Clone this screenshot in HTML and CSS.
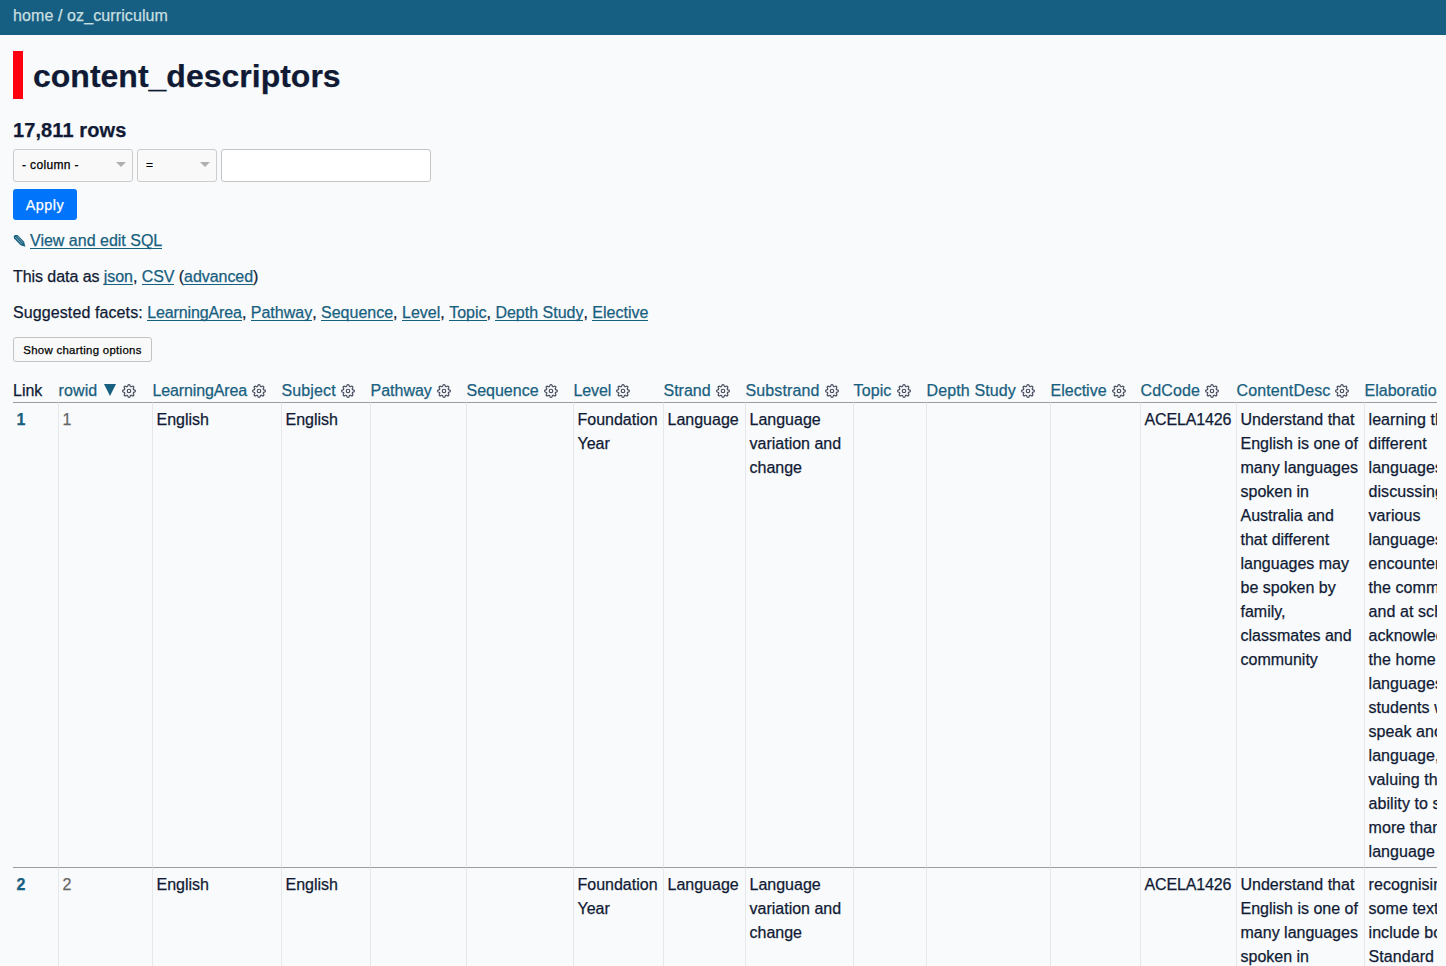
FILE: index.html
```html
<!DOCTYPE html>
<html lang="en">
<head>
<meta charset="utf-8">
<title>oz_curriculum: content_descriptors</title>
<link rel="stylesheet" href="styles.css">
</head>
<body>
<svg class="defs" width="0" height="0">
  <symbol id="cog" viewBox="0 0 24 24">
    <circle cx="12" cy="12" r="3"></circle>
    <path d="M19.4 15a1.65 1.65 0 0 0 .33 1.82l.06.06a2 2 0 0 1 0 2.83 2 2 0 0 1-2.83 0l-.06-.06a1.65 1.65 0 0 0-1.82-.33 1.65 1.65 0 0 0-1 1.51V21a2 2 0 0 1-2 2 2 2 0 0 1-2-2v-.09A1.65 1.65 0 0 0 9 19.4a1.65 1.65 0 0 0-1.82.33l-.06.06a2 2 0 0 1-2.83 0 2 2 0 0 1 0-2.83l.06-.06a1.65 1.65 0 0 0 .33-1.82 1.65 1.65 0 0 0-1.51-1H3a2 2 0 0 1-2-2 2 2 0 0 1 2-2h.09A1.65 1.65 0 0 0 4.6 9a1.65 1.65 0 0 0-.33-1.82l-.06-.06a2 2 0 0 1 0-2.83 2 2 0 0 1 2.83 0l.06.06a1.65 1.65 0 0 0 1.82.33H9a1.65 1.65 0 0 0 1-1.51V3a2 2 0 0 1 2-2 2 2 0 0 1 2 2v.09a1.65 1.65 0 0 0 1 1.51 1.65 1.65 0 0 0 1.82-.33l.06-.06a2 2 0 0 1 2.83 0 2 2 0 0 1 0 2.83l-.06.06a1.65 1.65 0 0 0-.33 1.82V9a1.65 1.65 0 0 0 1.51 1H21a2 2 0 0 1 2 2 2 2 0 0 1-2 2h-.09a1.65 1.65 0 0 0-1.51 1z"></path>
  </symbol>
</svg>
<header class="topbar"><a href="#">home</a> / <a href="#">oz_curriculum</a></header>
<main class="content">
  <h1 class="title">content_descriptors</h1>
  <h3 class="count">17,811 rows</h3>
  <form class="filters">
    <div class="filter-row">
      <div class="select column">- column -</div>
      <div class="select op">=</div>
      <input class="value" type="text" aria-label="Filter value">
    </div>
    <button class="apply" type="button">Apply</button>
  </form>
  <p class="line sql"><svg class="pencil" viewBox="0 0 13 14"><path class="body" d="M.6 2 2.2.9 4.6 1 11 7.6 12.4 12.8 7.6 11.2 1.1 4.6z"/><path class="grain" d="M2.2 3 8.8 10M3.9 2.2 10.2 8.8"/></svg><a href="#">View and edit SQL</a></p>
  <p class="line export">This data as <a href="#">json</a>, <a href="#">CSV</a> (<a href="#">advanced</a>)</p>
  <p class="line facets"><span class="label">Suggested facets:</span> <a class="tight" href="#">LearningArea</a>, <a href="#">Pathway</a>, <a href="#">Sequence</a>, <a href="#">Level</a>, <a href="#">Topic</a>, <a href="#">Depth Study</a>, <a href="#">Elective</a></p>
  <button class="chart" type="button">Show charting options</button>
  <div class="table-wrap">
    <table class="rows">
      <colgroup><col class="w45"><col class="w94"><col class="w129"><col class="w89"><col class="w96"><col class="w107"><col class="w90"><col class="w82"><col class="w108"><col class="w73"><col class="w124"><col class="w90"><col class="w96"><col class="w128"><col class="w128"></colgroup>
      <thead><tr>
        <th class="plain">Link</th>
        <th><a class="loose" href="#">rowid<svg class="sort" viewBox="0 0 12 12"><path d="M0 0h12L6 12z"/></svg></a><svg class="cog"><use href="#cog"/></svg></th>
        <th><a class="tight" href="#">LearningArea</a><svg class="cog"><use href="#cog"/></svg></th>
        <th><a class="loose" href="#">Subject</a><svg class="cog"><use href="#cog"/></svg></th>
        <th><a href="#">Pathway</a><svg class="cog"><use href="#cog"/></svg></th>
        <th><a href="#">Sequence</a><svg class="cog"><use href="#cog"/></svg></th>
        <th><a class="tight" href="#">Level</a><svg class="cog"><use href="#cog"/></svg></th>
        <th><a href="#">Strand</a><svg class="cog"><use href="#cog"/></svg></th>
        <th><a class="loose" href="#">Substrand</a><svg class="cog"><use href="#cog"/></svg></th>
        <th><a class="loose" href="#">Topic</a><svg class="cog"><use href="#cog"/></svg></th>
        <th><a class="loose" href="#">Depth Study</a><svg class="cog"><use href="#cog"/></svg></th>
        <th><a href="#">Elective</a><svg class="cog"><use href="#cog"/></svg></th>
        <th><a class="loose" href="#">CdCode</a><svg class="cog"><use href="#cog"/></svg></th>
        <th><a class="loose" href="#">ContentDesc</a><svg class="cog"><use href="#cog"/></svg></th>
        <th><a href="#">Elaboration</a><svg class="cog"><use href="#cog"/></svg></th>
      </tr></thead>
      <tbody>
      <tr>
        <td><a class="pk" href="#">1</a></td><td class="num">1</td><td>English</td><td>English</td><td></td><td></td>
        <td>Foundation<br>Year</td><td>Language</td><td>Language<br>variation and<br>change</td><td></td><td></td><td></td>
        <td class="code">ACELA1426</td>
        <td>Understand that<br>English is one of<br>many languages<br>spoken in<br>Australia and<br>that different<br>languages may<br>be spoken by<br>family,<br>classmates and<br>community</td>
        <td class="wide">learning that<br>different<br>languages exist,<br>discussing the<br>various<br>languages<br>encountered in<br>the community<br>and at school,<br>acknowledging<br>the home<br>languages of<br>students who<br>speak another<br>language, and<br>valuing the<br>ability to speak<br>more than one<br>language</td>
      </tr>
      <tr>
        <td><a class="pk" href="#">2</a></td><td class="num">2</td><td>English</td><td>English</td><td></td><td></td>
        <td>Foundation<br>Year</td><td>Language</td><td>Language<br>variation and<br>change</td><td></td><td></td><td></td>
        <td class="code">ACELA1426</td>
        <td>Understand that<br>English is one of<br>many languages<br>spoken in</td>
        <td class="wide">recognising that<br>some texts can<br>include both<br>Standard</td>
      </tr>
      </tbody>
    </table>
  </div>
</main>
</body>
</html>
```
FILE: styles.css
```css
* { box-sizing: border-box; }
html, body { height: 966px; overflow: hidden; }
body {
  margin: 0;
  background: #f8fafb;
  color: #111a35;
  font: 16px/24px "Helvetica Neue", "Liberation Sans", Arial, sans-serif;
  -webkit-text-stroke: 0.25px;
}
.defs { display: block; height: 0; }
a { color: #18607f; text-decoration: none; }
.topbar { height: 35px; padding: 4px 13px 0; background: #175f82; color: #d5e5e6; letter-spacing: 0.1px; }
.topbar a { color: #c8dfe0; }
.content { padding: 16px 9px 0 13px; }
.title {
  margin: 0; height: 48px; padding-left: 10px;
  border-left: 10px solid #ff0010;
  font-size: 32px; line-height: 50px;
}
.count { margin: 19px 0 0; height: 31px; font-size: 20px; line-height: 25px; letter-spacing: 0.1px; }
.filter-row { display: flex; gap: 4px; height: 33px; }
.select {
  position: relative; height: 33px; padding-left: 8px;
  border: 1px solid #ccc; border-radius: 3px; background: #f9f9f9; color: #000;
  font-size: 12px; line-height: 30px; letter-spacing: 0.35px;
}
.select::after {
  content: ""; position: absolute; right: 6px; top: 12px;
  border: 5px solid transparent; border-top-color: #b0b0b0; border-bottom: 0;
}
.column { width: 120px; }
.op { width: 80px; }
.value { width: 210px; height: 33px; border: 1px solid #c4c4c4; border-radius: 3px; background: #fff; }
.apply {
  display: block; margin-top: 7px; width: 64px; height: 31px; padding: 1px 0 0;
  border: 0; border-radius: 3px; background: #0074fb; color: #fff;
  font: 14.4px/30px "Liberation Sans", sans-serif; letter-spacing: 0.5px;
}
.line { margin: 0 0 12px; height: 24px; white-space: nowrap; }
.line a { box-shadow: 0 1px 0 #18607f; line-height: 17px; display: inline-block; height: 16px; }
.sql { margin-top: 9px; }
.export { letter-spacing: -0.06px; }
.label { letter-spacing: 0.1px; }
a.tight { letter-spacing: -0.12px; }
a.loose { letter-spacing: 0.13px; }
.pencil { width: 13px; height: 14px; margin-right: 4px; vertical-align: -2px; }
.pencil .body { fill: #18607f; }
.pencil .grain { fill: none; stroke: #c5dbe2; stroke-width: 0.6; }
.chart {
  display: block; width: 139px; height: 25px; padding: 1px 0 0;
  border: 1px solid #c4c4c4; border-radius: 3px; background: #f9f9f9; color: #000;
  font: 11.4px/22px "Liberation Sans", sans-serif; letter-spacing: 0.3px;
}
.table-wrap { width: 1424px; margin-top: 16px; overflow: hidden; }
.rows { width: 1479px; table-layout: fixed; border-collapse: separate; border-spacing: 0; }
.w45 { width: 45px; } .w94 { width: 94px; } .w129 { width: 129px; } .w89 { width: 89px; }
.w96 { width: 96px; } .w107 { width: 107px; } .w90 { width: 90px; } .w82 { width: 82px; }
.w108 { width: 108px; } .w73 { width: 73px; } .w124 { width: 124px; } .w128 { width: 128px; }
.rows th { height: 24px; padding: 1px 0 0 0.5px; line-height: 23px; font-weight: 400; text-align: left; white-space: nowrap; }
.rows th.plain { padding-left: 0; }
.sort { width: 12px; height: 12px; margin: 0 1px 0 7px; fill: #18607f; vertical-align: 0; }
.cog { width: 14px; height: 14px; margin-left: 5px; vertical-align: -2px; fill: none; stroke: #444a5c; stroke-width: 2; stroke-linecap: round; stroke-linejoin: round; }
.rows td {
  padding: 5px 0 3px 3.5px; vertical-align: top; white-space: nowrap;
  border-top: 1px solid #999da0; border-left: 1px solid #e6e8ea;
}
.rows td:first-child { border-left: 0; }
.pk { font-weight: 700; }
.rows .num { color: #666; }
.rows .code { letter-spacing: -0.15px; }
.rows .wide { letter-spacing: 0.08px; }
```
